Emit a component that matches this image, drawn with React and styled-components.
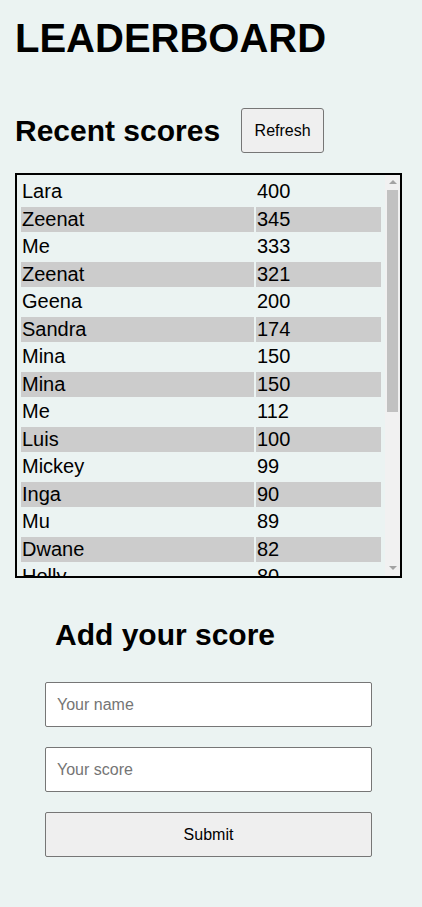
import styled, { createGlobalStyle } from 'styled-components';

const SCORES = [
  { user: "Lara", score: 400 },
  { user: "Zeenat", score: 345 },
  { user: "Me", score: 333 },
  { user: "Zeenat", score: 321 },
  { user: "Geena", score: 200 },
  { user: "Sandra", score: 174 },
  { user: "Mina", score: 150 },
  { user: "Mina", score: 150 },
  { user: "Me", score: 112 },
  { user: "Luis", score: 100 },
  { user: "Mickey", score: 99 },
  { user: "Inga", score: 90 },
  { user: "Mu", score: 89 },
  { user: "Dwane", score: 82 },
  { user: "Holly", score: 80 },
  { user: "Kim", score: 78 },
  { user: "Rita", score: 75 },
  { user: "Tom", score: 70 },
  { user: "Zeenat", score: 65 },
  { user: "Lara", score: 60 },
  { user: "Sam", score: 55 },
  { user: "Ben", score: 50 },
  { user: "Ada", score: 45 },
  { user: "Joe", score: 40 },
  { user: "Nia", score: 30 },
]

const GlobalStyle = createGlobalStyle`
  body {
    margin: 0;
    background: #ebf3f2;
    font-family: "Liberation Sans", Arial, sans-serif;
    color: #000;
  }
`;

export default function App() {
  return (
    <>
      <GlobalStyle />
      <Page>
        <Title>LEADERBOARD</Title>
        <ScoresHeader>
          <SubTitle>Recent scores</SubTitle>
          <Button type="button">Refresh</Button>
        </ScoresHeader>
        <ScoresBox>
          <Viewport>
            <Table>
              <tbody>
                {SCORES.map((s, i) => (
                  <Row key={i} $striped={i % 2 === 1}>
                    <NameCell>{s.user}</NameCell>
                    <Cell>{s.score}</Cell>
                  </Row>
                ))}
              </tbody>
            </Table>
          </Viewport>
          <ScrollBar>
            <ScrollArrow $dir="up" />
            <ScrollTrack>
              <ScrollThumb />
            </ScrollTrack>
            <ScrollArrow $dir="down" />
          </ScrollBar>
        </ScoresBox>
        <Form onSubmit={(e) => e.preventDefault()}>
          <FormTitle>Add your score</FormTitle>
          <Input type="text" placeholder="Your name" />
          <Input type="text" placeholder="Your score" />
          <SubmitButton type="submit">Submit</SubmitButton>
        </Form>
      </Page>
    </>
  )
}

const Page = styled.div`
  padding: 16px 20px 50px 15px;
`;

const Title = styled.h1`
  margin: 0;
  font-size: 40px;
  font-weight: bold;
`;

const ScoresHeader = styled.div`
  display: flex;
  align-items: center;
  gap: 21px;
  margin-top: 47px;
`;

const SubTitle = styled.h2`
  margin: 0;
  font-size: 30px;
  font-weight: bold;
`;

const Button = styled.button`
  width: 83px;
  height: 45px;
  font-family: "Liberation Sans", Arial, sans-serif;
  font-size: 16px;
  background: #efefef;
  border: 1px solid #767676;
  border-radius: 3px;
  color: #000;
`;

const ScoresBox = styled.div`
  display: flex;
  margin-top: 20px;
  height: 405px;
  box-sizing: border-box;
  border: 2px solid #000;
`;

const Viewport = styled.div`
  flex: 1;
  padding: 2px;
  overflow-y: auto;
  scrollbar-width: none;

  &::-webkit-scrollbar {
    display: none;
  }
`;

const ScrollBar = styled.div`
  display: flex;
  flex-direction: column;
  width: 15px;
  background: #f1f1f1;
`;

const ScrollArrow = styled.div`
  height: 15px;
  display: flex;
  align-items: center;
  justify-content: center;

  &::after {
    content: "";
    border-left: 4px solid transparent;
    border-right: 4px solid transparent;
    ${({ $dir }) =>
      $dir === 'up'
        ? 'border-bottom: 4px solid #a3a3a3; margin-top: -1px;'
        : 'border-top: 4px solid #a3a3a3; margin-top: -2px;'}
  }
`;

const ScrollTrack = styled.div`
  flex: 1;
  padding: 0 2px;
`;

const ScrollThumb = styled.div`
  height: 222px;
  background: #c1c1c1;
`;

const Table = styled.table`
  width: 100%;
  border-spacing: 2px;
  font-size: 20px;
`;

const Row = styled.tr`
  background: ${({ $striped }) => ($striped ? '#cccccc' : 'transparent')};
`;

const Cell = styled.td`
  padding: 1px;
  line-height: 23.5px;
`;

const NameCell = styled(Cell)`
  width: 231px;
`;

const Form = styled.form`
  display: flex;
  flex-direction: column;
  gap: 20px;
  margin: 40px 30px 0;
`;

const FormTitle = styled.h2`
  margin: 0 0 10px 10px;
  font-size: 30px;
  font-weight: bold;
`;

const Input = styled.input`
  height: 45px;
  box-sizing: border-box;
  padding: 0 11px;
  font-family: "Liberation Sans", Arial, sans-serif;
  font-size: 16px;
  background: #fff;
  border: 1px solid #767676;
  border-radius: 2px;

  &::placeholder {
    color: #757575;
  }
`;

const SubmitButton = styled(Button)`
  width: 100%;
  border-radius: 2px;
`;
